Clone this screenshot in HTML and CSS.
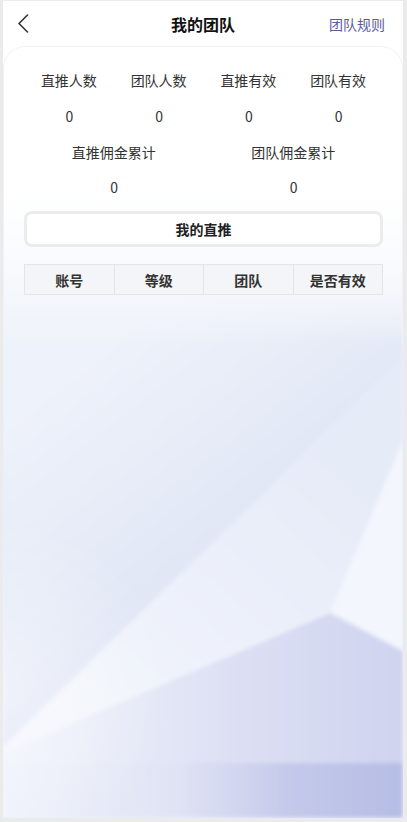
FILE: index.html
```html
<!DOCTYPE html>
<html lang="zh-CN">
<head>
<meta charset="utf-8">
<title>我的团队</title>
<link rel="stylesheet" href="styles.css">
</head>
<body>
<div class="frame">
  <div class="phone">
    <svg class="backdrop" viewBox="0 0 400 817" preserveAspectRatio="none" aria-hidden="true">
      <defs>
        <linearGradient id="base" gradientUnits="userSpaceOnUse" x1="0" y1="0" x2="0" y2="817">
          <stop offset="0" stop-color="#ffffff"/>
          <stop offset="0.1" stop-color="#ffffff"/>
          <stop offset="0.34" stop-color="#eff3fa"/>
          <stop offset="0.6" stop-color="#e8edf8"/>
          <stop offset="1" stop-color="#eef2fb"/>
        </linearGradient>
        <linearGradient id="upper" gradientUnits="userSpaceOnUse" x1="90" y1="360" x2="230" y2="540">
          <stop offset="0" stop-color="#eef2fa"/>
          <stop offset="0.5" stop-color="#e7ecf8"/>
          <stop offset="1" stop-color="#e1e6f6"/>
        </linearGradient>
        <linearGradient id="lower" gradientUnits="userSpaceOnUse" x1="330" y1="460" x2="90" y2="720">
          <stop offset="0" stop-color="#e6ebf8"/>
          <stop offset="1" stop-color="#f2f5fc"/>
        </linearGradient>
        <linearGradient id="floor" x1="0" y1="0" x2="1" y2="0">
          <stop offset="0" stop-color="#eff3fb"/>
          <stop offset="0.55" stop-color="#dee1f4"/>
          <stop offset="1" stop-color="#cfd3ef"/>
        </linearGradient>
        <linearGradient id="band" x1="0" y1="0" x2="1" y2="0">
          <stop offset="0" stop-color="#eef2fb"/>
          <stop offset="0.45" stop-color="#dfe2f4"/>
          <stop offset="0.72" stop-color="#c4c9ea"/>
          <stop offset="1" stop-color="#b6bde4"/>
        </linearGradient>
        <radialGradient id="glow" cx="0" cy="690" r="170" gradientUnits="userSpaceOnUse">
          <stop offset="0" stop-color="#ffffff" stop-opacity="0.45"/>
          <stop offset="1" stop-color="#ffffff" stop-opacity="0"/>
        </radialGradient>
        <linearGradient id="fadeTop" gradientUnits="userSpaceOnUse" x1="0" y1="290" x2="0" y2="340">
          <stop offset="0" stop-color="#eef2fa" stop-opacity="1"/>
          <stop offset="1" stop-color="#eef2fa" stop-opacity="0"/>
        </linearGradient>
        <filter id="soft" x="-5%" y="-5%" width="110%" height="110%">
          <feGaussianBlur stdDeviation="2"/>
        </filter>
      </defs>
      <rect width="400" height="817" fill="url(#base)"/>
      <g filter="url(#soft)">
        <polygon points="0,300 400,300 400,356 0,746" fill="url(#upper)"/>
        <polygon points="400,356 400,440 327,611 0,752 0,746" fill="url(#lower)"/>
        <polygon points="400,440 327,611 400,650" fill="#f3f6fd"/>
        <polygon points="0,752 327,611 400,650 400,763 0,763" fill="url(#floor)"/>
        <rect y="762" width="400" height="55" fill="url(#band)"/>
        <polyline points="0,750 327,611 400,649" fill="none" stroke="#f6f8fe" stroke-width="1.5" stroke-opacity="0.8"/>
      </g>
      <rect y="290" width="400" height="50" fill="url(#fadeTop)"/>
      <rect width="400" height="817" fill="url(#glow)"/>
    </svg>

    <header class="nav">
      <svg class="nav-back" viewBox="0 0 12 20" aria-label="返回">
        <polyline points="10.5,1 2,9.5 10.5,18" fill="none" stroke="#333" stroke-width="1.6" stroke-linecap="round" stroke-linejoin="round"/>
      </svg>
      <h1 class="nav-title">我的团队</h1>
      <a class="nav-link">团队规则</a>
    </header>

    <section class="card">
      <div class="stats stats-four">
        <div class="stat"><span class="stat-label">直推人数</span><span class="stat-value">0</span></div>
        <div class="stat"><span class="stat-label">团队人数</span><span class="stat-value">0</span></div>
        <div class="stat"><span class="stat-label">直推有效</span><span class="stat-value">0</span></div>
        <div class="stat"><span class="stat-label">团队有效</span><span class="stat-value">0</span></div>
      </div>
      <div class="stats stats-two">
        <div class="stat"><span class="stat-label">直推佣金累计</span><span class="stat-value last">0</span></div>
        <div class="stat"><span class="stat-label">团队佣金累计</span><span class="stat-value last">0</span></div>
      </div>

      <button class="tab-btn" type="button">我的直推</button>

      <table class="member-table">
        <thead>
          <tr><th>账号</th><th>等级</th><th>团队</th><th>是否有效</th></tr>
        </thead>
      </table>
    </section>
  </div>
</div>
</body>
</html>
```

FILE: styles.css
```css
* { box-sizing: border-box; }

html, body {
  margin: 0;
  padding: 0;
  background: #ebebeb;
}

body {
  font-family: "Noto Sans CJK SC", "Noto Sans", sans-serif;
  color: #333;
}

.frame {
  width: 407px;
  height: 822px;
  padding: 1px 4px 4px 3px;
  background: #ebebeb;
}

.phone {
  position: relative;
  width: 400px;
  height: 817px;
  overflow: hidden;
  background: #fff;
}

.backdrop {
  position: absolute;
  inset: 0;
  width: 100%;
  height: 100%;
  z-index: 0;
}

.nav {
  position: relative;
  z-index: 1;
  height: 45px;
  display: flex;
  align-items: center;
  justify-content: space-between;
  padding: 0 18px 0 14px;
}

.nav-back {
  width: 12px;
  height: 20px;
  display: block;
}

.nav-title {
  position: absolute;
  left: 0;
  right: 0;
  margin: 0;
  text-align: center;
  font-size: 16px;
  font-weight: 700;
  color: #111;
  pointer-events: none;
}

.nav-link {
  font-size: 14px;
  color: #5d5ca0;
}

.card {
  position: relative;
  z-index: 1;
  border: 1px solid #f1f2f8;
  border-bottom: none;
  border-radius: 22px 22px 0 0;
  padding: 15px 19px 0 20px;
  height: 300px;
  background: linear-gradient(180deg, #ffffff 0, #ffffff 140px, rgba(255, 255, 255, 0.55) 220px, rgba(255, 255, 255, 0) 300px);
}

.stats {
  display: grid;
}

.stats-four { grid-template-columns: repeat(4, 1fr); }
.stats-two { grid-template-columns: repeat(2, 1fr); }

.stat {
  display: flex;
  flex-direction: column;
  align-items: center;
}

.stat-label,
.stat-value {
  display: block;
  height: 36px;
  line-height: 36px;
  font-size: 14px;
  color: #333;
}

.stat-value {
  padding-left: 1px;
}

.stat-value.last {
  height: 34px;
  line-height: 34px;
}

.tab-btn {
  display: block;
  width: 100%;
  height: 36px;
  margin-top: 7px;
  border: 3px solid #ececec;
  border-radius: 8px;
  background: #fff;
  font-family: inherit;
  font-size: 14px;
  font-weight: 700;
  color: #222;
  padding: 0;
}

.member-table {
  width: 100%;
  margin-top: 17px;
  border-collapse: collapse;
  table-layout: fixed;
}

.member-table th {
  height: 30px;
  padding: 0;
  border: 1px solid #e3e5ed;
  background: #f4f5f8;
  font-size: 14px;
  font-weight: 700;
  color: #333;
  text-align: center;
}
```
